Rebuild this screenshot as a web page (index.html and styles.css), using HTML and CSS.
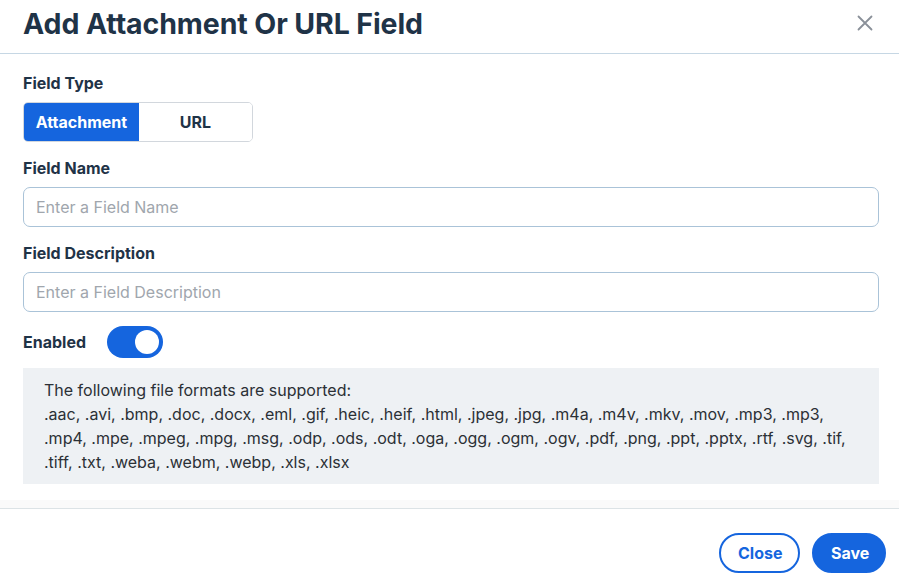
FILE: index.html
```html
<!DOCTYPE html>
<html>
<head>
<meta charset="utf-8">
<link rel="stylesheet" href="styles.css">
</head>
<body>
<div class="modal">
  <header class="modal-header">
    <h1 class="modal-title">Add Attachment Or URL Field</h1>
    <button class="close-x" aria-label="Close">
      <svg width="16" height="16" viewBox="0 0 16 16"><path d="M1.5 1.5 L14.5 14.5 M14.5 1.5 L1.5 14.5" stroke="#8a9099" stroke-width="1.8" stroke-linecap="round" fill="none"/></svg>
    </button>
  </header>
  <main class="modal-body">
    <div class="field">
      <div class="label">Field Type</div>
      <div class="segmented">
        <button class="seg seg-active">Attachment</button>
        <button class="seg">URL</button>
      </div>
    </div>
    <div class="field">
      <div class="label">Field Name</div>
      <input class="input" placeholder="Enter a Field Name">
    </div>
    <div class="field">
      <div class="label">Field Description</div>
      <input class="input" placeholder="Enter a Field Description">
    </div>
    <div class="toggle-row">
      <div class="label label-inline">Enabled</div>
      <div class="toggle"><span class="knob"></span></div>
    </div>
    <div class="info">
      <p>The following file formats are supported:</p>
      <p>.aac, .avi, .bmp, .doc, .docx, .eml, .gif, .heic, .heif, .html, .jpeg, .jpg, .m4a, .m4v, .mkv, .mov, .mp3, .mp3, .mp4, .mpe, .mpeg, .mpg, .msg, .odp, .ods, .odt, .oga, .ogg, .ogm, .ogv, .pdf, .png, .ppt, .pptx, .rtf, .svg, .tif, .tiff, .txt, .weba, .webm, .webp, .xls, .xlsx</p>
    </div>
  </main>
  <div class="body-fade"></div>
  <footer class="modal-footer">
    <button class="btn btn-outline">Close</button>
    <button class="btn btn-primary">Save</button>
  </footer>
</div>
</body>
</html>
```

FILE: styles.css
```css
* { box-sizing: border-box; }
html, body { margin: 0; padding: 0; background: #ffffff; }
body { font-family: Inter, "Noto Sans", sans-serif; color: #1f3347; }
.modal { width: 899px; height: 586px; display: flex; flex-direction: column; background: #fff; }
.modal-header {
  height: 54px;
  border-bottom: 1px solid #c6d7e4;
  display: flex;
  align-items: center;
  justify-content: space-between;
  padding: 0 26px 0 23px;
}
.modal-title { margin: 0; font-size: 28.5px; font-weight: 700; color: #1f3347; letter-spacing: -0.1px; padding-bottom: 6px; }
.close-x { background: none; border: 0; padding: 0; width: 16px; height: 16px; display: flex; margin-top: -8px; }
.modal-body { padding: 19px 20px 0 23px; display: flex; flex-direction: column; }
.field { display: flex; flex-direction: column; margin-bottom: 16px; }
.label { font-size: 16px; font-weight: 700; color: #1f3347; line-height: 20px; margin-bottom: 9px; }
.segmented { display: flex; width: 230px; height: 40px; border: 1px solid #d2d7dd; border-radius: 5px; overflow: hidden; }
.seg { flex: 1; border: 0; background: #fff; font-family: inherit; font-size: 16px; font-weight: 700; color: #1f3347; padding: 0; }
.seg-active { background: #1565de; color: #fff; flex: 0 0 115px; }
.input {
  height: 40px;
  width: 856px;
  border: 1px solid #aac3d8;
  border-radius: 7px;
  padding: 0 12px;
  font-family: inherit;
  font-size: 16px;
  color: #1f3347;
  outline: none;
}
.input::placeholder { color: #a0a6ad; }
.toggle-row { display: flex; align-items: center; gap: 21px; margin-top: -2px; margin-bottom: 10px; }
.label-inline { margin-bottom: 0; }
.toggle { width: 56px; height: 32px; border-radius: 16px; background: #1565de; position: relative; }
.knob { position: absolute; right: 4px; top: 4px; width: 24px; height: 24px; border-radius: 50%; background: #fff; }
.info { background: #eef1f4; width: 856px; padding: 10px 21px 10px 21px; font-size: 16px; line-height: 24px; color: #2b3036; }
.info p { margin: 0; }
.body-fade { height: 8px; background: #fafafa; margin-top: 16px; }
.modal-footer {
  border-top: 1px solid #dce3e6;
  flex: 1;
  display: flex;
  justify-content: flex-end;
  align-items: flex-start;
  gap: 12px;
  padding: 24px 13px 0 0;
}
.btn { height: 40px; border-radius: 20px; font-family: inherit; font-size: 16px; font-weight: 700; padding: 0 17px; }
.btn-outline { background: #fff; border: 2px solid #1565de; color: #1565de; width: 81px; }
.btn-primary { background: #1565de; border: 2px solid #1565de; color: #fff; width: 74px; }
```
